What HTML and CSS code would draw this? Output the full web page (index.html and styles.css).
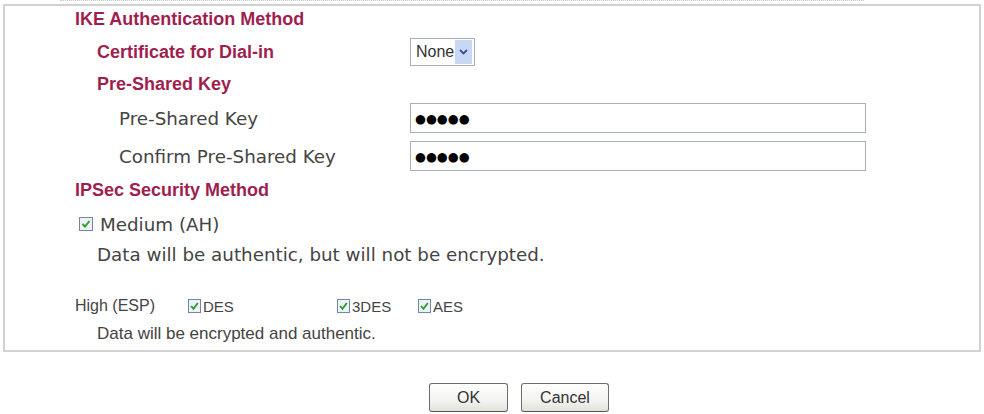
FILE: index.html
```html
<!DOCTYPE html>
<html lang="en">
<head>
  <meta charset="UTF-8">
  <title>IPSec Dial-in Settings</title>
  <link rel="stylesheet" href="styles.css">
</head>
<body>

<div class="top-strip"></div>

<div class="panel">
  <!-- IKE -->
  <div class="row r-head1">
    <span class="head lvl0">IKE Authentication Method</span>
  </div>
  <div class="row r-cert">
    <span class="label head lvl1">Certificate for Dial-in</span>
    <div class="select">
      <span class="select-text">None</span>
      <span class="select-btn">
        <svg width="9" height="6" viewBox="0 0 9 6"><path d="M1 1 L4.5 4.5 L8 1" fill="none" stroke="#3a4f9a" stroke-width="1.8"/></svg>
      </span>
    </div>
  </div>
  <div class="row r-psk-head">
    <span class="head lvl1">Pre-Shared Key</span>
  </div>
  <div class="row r-psk">
    <span class="label text lvl2">Pre-Shared Key</span>
    <div class="input">&#9679;&#9679;&#9679;&#9679;&#9679;</div>
  </div>
  <div class="row r-confirm">
    <span class="label text lvl2">Confirm Pre-Shared Key</span>
    <div class="input">&#9679;&#9679;&#9679;&#9679;&#9679;</div>
  </div>

  <!-- IPSec -->
  <div class="row r-ipsec">
    <span class="head lvl0">IPSec Security Method</span>
  </div>
  <div class="row r-medium">
    <span class="check medium-check">
      <svg width="14" height="14" viewBox="0 0 14 14"><rect x="0.5" y="0.5" width="13" height="13" fill="#eef2f6" stroke="#6f87a8"/><path d="M3.5 7 L6 9.6 L10.5 4" fill="none" stroke="#2c9a2c" stroke-width="1.9"/></svg>
    </span>
    <span class="text">Medium (AH)</span>
  </div>
  <div class="row r-note1">
    <span class="text lvl1b">Data will be authentic, but will not be encrypted.</span>
  </div>
  <div class="row r-high">
    <span class="small high-label">High (ESP)</span>
    <span class="cipher c-des">
      <svg width="13" height="14" viewBox="0 0 13 14"><rect x="0.5" y="0.5" width="12" height="13" fill="#eef2f6" stroke="#6f87a8"/><path d="M3 7 L5.5 9.8 L9.8 4" fill="none" stroke="#2c9a2c" stroke-width="1.8"/></svg>
      <span class="small">DES</span>
    </span>
    <span class="cipher c-3des">
      <svg width="13" height="14" viewBox="0 0 13 14"><rect x="0.5" y="0.5" width="12" height="13" fill="#eef2f6" stroke="#6f87a8"/><path d="M3 7 L5.5 9.8 L9.8 4" fill="none" stroke="#2c9a2c" stroke-width="1.8"/></svg>
      <span class="small">3DES</span>
    </span>
    <span class="cipher">
      <svg width="13" height="14" viewBox="0 0 13 14"><rect x="0.5" y="0.5" width="12" height="13" fill="#eef2f6" stroke="#6f87a8"/><path d="M3 7 L5.5 9.8 L9.8 4" fill="none" stroke="#2c9a2c" stroke-width="1.8"/></svg>
      <span class="small">AES</span>
    </span>
  </div>
  <div class="row r-note2">
    <span class="small note lvl1b">Data will be encrypted and authentic.</span>
  </div>
</div>

<div class="buttons">
  <button class="btn btn-ok">OK</button>
  <button class="btn btn-cancel">Cancel</button>
</div>

</body>
</html>
```

FILE: styles.css
```css
body {
  margin: 0;
  background: #fff;
  color: #444;
  font-family: "DejaVu Sans", Verdana, sans-serif;
}
.top-strip {
  height: 4px;
  border-top: 1px dotted #c8c8c8;
  box-sizing: border-box;
  margin: 0 120px 0 60px;
}
.panel {
  margin: 0 3px;
  border: 2px solid #d2d2d0;
  height: 348px;
  box-sizing: border-box;
}
.row {
  display: flex;
  align-items: center;
}
.r-head1   { height: 26px; }
.r-cert    { height: 40px; }
.r-psk-head{ height: 24px; }
.r-psk     { height: 44px; }
.r-confirm { height: 32px; }
.r-ipsec   { height: 36px; }
.r-medium  { height: 32px; }
.r-note1   { height: 28px; margin-bottom: 24px; }
.r-high    { height: 28px; }
.r-note2   { height: 28px; }

.head {
  font-family: "Liberation Sans", Arial, sans-serif;
  font-weight: bold;
  font-size: 18px;
  color: #9e1f4f;
}
.text {
  font-size: 18.3px;
  color: #444;
}
.small {
  font-family: "Liberation Sans", Arial, sans-serif;
  font-size: 15px;
  color: #444;
}
.note { font-size: 17px; }
.lvl0 { padding-left: 70px; }
.lvl1 { padding-left: 92px; }
.lvl1b { padding-left: 92px; }
.lvl2 { padding-left: 114px; }
.label {
  width: 405px;
  box-sizing: border-box;
  flex: none;
}

.select {
  display: flex;
  align-items: center;
  width: 65px;
  height: 28px;
  box-sizing: border-box;
  border: 1px solid #a9b0b8;
  background: #fff;
}
.select-text {
  flex: 1;
  padding-left: 5px;
  font-family: "Liberation Sans", Arial, sans-serif;
  font-size: 16px;
  color: #333;
}
.select-btn {
  width: 17px;
  height: 24px;
  margin-right: 2px;
  background: #c8d8f4;
  display: flex;
  align-items: center;
  justify-content: center;
}

.input {
  width: 456px;
  height: 30px;
  box-sizing: border-box;
  border: 1px solid #a9b0b8;
  padding-left: 4px;
  display: flex;
  align-items: center;
  font-size: 12.5px;
  color: #000;
}

.medium-check {
  margin-left: 74px;
  margin-right: 7px;
  display: flex;
}
.check svg, .cipher svg { display: block; }

.high-label {
  width: 183px;
  padding-left: 70px;
  box-sizing: border-box;
  flex: none;
  font-size: 16px;
}
.cipher {
  display: flex;
  align-items: center;
  gap: 2px;
}
.c-des  { width: 149px; }
.c-3des { width: 81px; }

.buttons {
  display: flex;
  justify-content: center;
  gap: 13px;
  padding: 31px 0 0 54px;
}
.btn {
  height: 29px;
  border: 1px solid #6d6d6d;
  border-bottom-color: #555;
  border-radius: 3px;
  background: linear-gradient(#ffffff, #f3f3f0 60%, #e2e2dc);
  font-family: "Liberation Sans", Arial, sans-serif;
  font-size: 16px;
  color: #333;
  padding: 0;
}
.btn-ok { width: 79px; }
.btn-cancel { width: 88px; }
```
